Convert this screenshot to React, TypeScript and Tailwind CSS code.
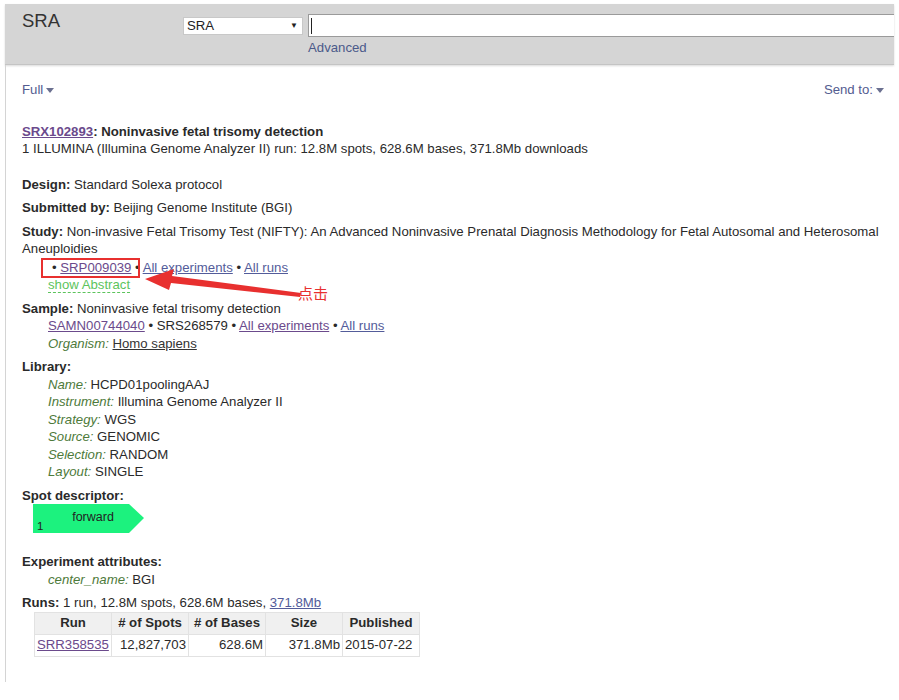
import React from "react";

const visited = "text-[#6b4a8c] underline";
const linkBlue = "text-[#535c9a] underline";
const label = "italic text-[#4d7a3a]";

function Caret() {
  return (
    <svg width="8" height="5" viewBox="0 0 8 5" className="inline-block ml-[3px] align-middle">
      <path d="M0 0 H8 L4 5 Z" fill="#6b7090" />
    </svg>
  );
}

function SpotShape() {
  return (
    <svg width="112" height="30" viewBox="0 0 112 30">
      <polygon points="0,0 96,0 111,14 96,29 0,29" fill="#1cf27e" />
      <text x="60" y="17" fontSize="12.5" textAnchor="middle" fill="#222" fontFamily="Liberation Sans, Arial, sans-serif">
        forward
      </text>
      <text x="4" y="26" fontSize="11.5" fill="#222" fontFamily="Liberation Sans, Arial, sans-serif">
        1
      </text>
    </svg>
  );
}

export default function App() {
  return (
    <div className="w-[899px] h-[700px] bg-white overflow-hidden font-['Liberation_Sans',Arial,sans-serif] text-[13.2px] leading-[17.5px] text-[#2a2a2a]">
      <div className="h-[4px]" />
      {/* Header */}
      <div className="ml-[5px] mr-[5px] h-[61px] bg-[#d5d5d5] border-b border-[#c4c4c4] shadow-[0_1px_2px_rgba(0,0,0,0.15)] flex overflow-hidden">
        <div className="shrink-0 pl-[17px] pt-[8px] text-[18.5px] text-[#333] w-[178px]">SRA</div>
        <div className="shrink-0 pt-[10px] flex flex-col">
          <div className="flex items-center">
            <div className="shrink-0 w-[120px] h-[18px] bg-white border border-[#c8c8c8] flex items-center justify-between px-[3px] text-[13.2px] text-[#222]">
              <span>SRA</span>
              <span className="text-[8px] pr-[1px]">▼</span>
            </div>
            <div className="shrink-0 ml-[5px] w-[586px] h-[23px] bg-white border-y border-l border-[#9a9a9a] flex items-center pl-[2px]">
              <div className="w-px h-[16px] bg-[#222]" />
            </div>
          </div>
          <div className="ml-[125px] mt-[2px] text-[13.2px] text-[#4b5a8a]">Advanced</div>
        </div>
      </div>

      {/* Body */}
      <div className="ml-[5px] mr-[5px] border-l border-[#d4d4d4] h-[617px] relative">
        <div className="flex justify-between pl-[16px] pr-[10px] pt-[16px] text-[13.2px] text-[#535c90]">
          <span>
            Full
            <Caret />
          </span>
          <span>
            Send to:
            <Caret />
          </span>
        </div>

        <div className="pl-[16px] pr-[8px] pt-[24px]">
          <div>
            <a className={`${visited} font-bold`}>SRX102893</a>
            <span className="font-bold">: Noninvasive fetal trisomy detection</span>
          </div>
          <div>1 ILLUMINA (Illumina Genome Analyzer II) run: 12.8M spots, 628.6M bases, 371.8Mb downloads</div>

          <div className="mt-[18px]">
            <span className="font-bold">Design:</span> Standard Solexa protocol
          </div>
          <div className="mt-[6px]">
            <span className="font-bold">Submitted by:</span> Beijing Genome Institute (BGI)
          </div>
          <div className="mt-[6px]">
            <span className="font-bold">Study:</span> Non-invasive Fetal Trisomy Test (NIFTY): An Advanced Noninvasive
            Prenatal Diagnosis Methodology for Fetal Autosomal and Heterosomal Aneuploidies
          </div>
          <div className="pl-[26px]">
            <div className="mt-[1px] relative">
              <span className="absolute left-[-7px] top-[-1px] w-[99px] h-[20px] border-2 border-[#e8302f]" />
              <span className="ml-[4px]">• </span>
              <a className={visited}>SRP009039</a> • <a className={linkBlue}>All experiments</a> •{" "}
              <a className={linkBlue}>All runs</a>
            </div>
            <div>
              <span className="text-[#5cc45c] border-b border-dashed border-[#5cc45c]">show Abstract</span>
            </div>
          </div>

          <div className="mt-[6px]">
            <span className="font-bold">Sample:</span> Noninvasive fetal trisomy detection
          </div>
          <div className="pl-[26px]">
            <div>
              <a className={visited}>SAMN00744040</a> • SRS268579 • <a className={visited}>All experiments</a> •{" "}
              <a className={linkBlue}>All runs</a>
            </div>
            <div>
              <span className={label}>Organism:</span> <a className="text-[#333] underline">Homo sapiens</a>
            </div>
          </div>

          <div className="mt-[6px] font-bold">Library:</div>
          <div className="pl-[26px]">
            <div>
              <span className={label}>Name:</span> HCPD01poolingAAJ
            </div>
            <div>
              <span className={label}>Instrument:</span> Illumina Genome Analyzer II
            </div>
            <div>
              <span className={label}>Strategy:</span> WGS
            </div>
            <div>
              <span className={label}>Source:</span> GENOMIC
            </div>
            <div>
              <span className={label}>Selection:</span> RANDOM
            </div>
            <div>
              <span className={label}>Layout:</span> SINGLE
            </div>
          </div>

          <div className="mt-[6px] font-bold">Spot descriptor:</div>
          <div className="pl-[11px] mt-[0px]">
            <SpotShape />
          </div>

          <div className="mt-[19px] font-bold">Experiment attributes:</div>
          <div className="pl-[26px]">
            <span className={label}>center_name:</span> BGI
          </div>

          <div className="mt-[6px]">
            <span className="font-bold">Runs:</span> 1 run, 12.8M spots, 628.6M bases,{" "}
            <a className={linkBlue}>371.8Mb</a>
          </div>
          <table className="ml-[12px] border-collapse border border-[#e2e2e2]">
            <thead>
              <tr className="bg-[#f0f0f0]">
                <th className="w-[77px] h-[22px] font-bold border border-[#e2e2e2] text-center">Run</th>
                <th className="w-[77px] font-bold border border-[#e2e2e2] text-center"># of Spots</th>
                <th className="w-[77px] font-bold border border-[#e2e2e2] text-center"># of Bases</th>
                <th className="w-[77px] font-bold border border-[#e2e2e2] text-center">Size</th>
                <th className="w-[77px] font-bold border border-[#e2e2e2] text-center">Published</th>
              </tr>
            </thead>
            <tbody>
              <tr>
                <td className="h-[22px] border border-[#e2e2e2] px-[2px]">
                  <a className={visited}>SRR358535</a>
                </td>
                <td className="border border-[#e2e2e2] px-[2px] text-right">12,827,703</td>
                <td className="border border-[#e2e2e2] px-[2px] text-right">628.6M</td>
                <td className="border border-[#e2e2e2] px-[2px] text-right">371.8Mb</td>
                <td className="border border-[#e2e2e2] px-[2px]">2015-07-22</td>
              </tr>
            </tbody>
          </table>
        </div>

        {/* annotation arrow */}
        <svg className="absolute left-0 top-0 pointer-events-none" width="340" height="260" viewBox="0 0 340 260">
          <path d="M139 214 L168 204 L166 211 L295 228 L294 232 L165 218 L163 225 Z" fill="#e8302f" />
        </svg>
        <span className="absolute left-[292px] top-[219px] text-[15px] text-[#e8302f] font-['Noto_Sans_CJK_SC',sans-serif]">
          点击
        </span>
      </div>
    </div>
  );
}
